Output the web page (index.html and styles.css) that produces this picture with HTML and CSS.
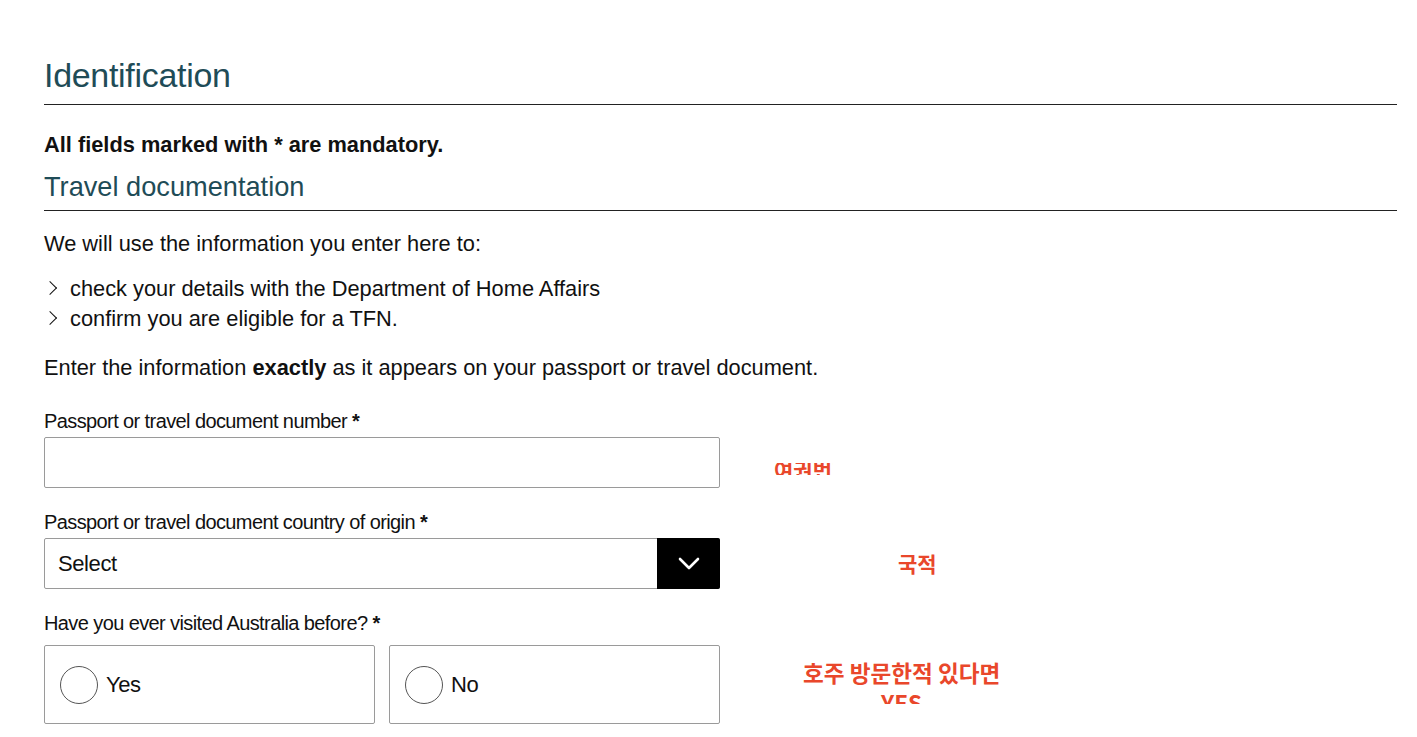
FILE: index.html
```html
<!DOCTYPE html>
<html>
<head>
    <title>Identification</title>
    <link rel="stylesheet" href="styles.css">
</head>
<body>
    <div class="page">
        <h1 class="page-title">Identification</h1>
        <p class="mandatory">All fields marked with * are mandatory.</p>

        <h2 class="section-title">Travel documentation</h2>
        <p class="intro">We will use the information you enter here to:</p>
        <ul class="chevron-list">
            <li>check your details with the Department of Home Affairs</li>
            <li>confirm you are eligible for a TFN.</li>
        </ul>
        <p class="intro">Enter the information <strong>exactly</strong> as it appears on your passport or travel document.</p>

        <form class="id-form">
            <div class="field">
                <label for="docNumber">Passport or travel document number <span class="req">*</span></label>
                <input type="text" id="docNumber" class="text-input">
                <span class="note note-number"><span>여권번호</span></span>
            </div>

            <div class="field">
                <label for="docCountry">Passport or travel document country of origin <span class="req">*</span></label>
                <div class="select-box">
                    <span class="select-value" id="docCountry">Select</span>
                    <span class="select-btn">
                        <svg width="22" height="14" viewBox="0 0 22 14"><path d="M2 2 L11 11 L20 2" fill="none" stroke="#fff" stroke-width="2.6" stroke-linecap="round" stroke-linejoin="round"/></svg>
                    </span>
                </div>
                <span class="note note-country">국적</span>
            </div>

            <div class="field">
                <label class="group-label">Have you ever visited Australia before? <span class="req">*</span></label>
                <div class="radio-row">
                    <label class="radio-card"><span class="radio-dot"></span>Yes</label>
                    <label class="radio-card"><span class="radio-dot"></span>No</label>
                </div>
                <span class="note note-visit">호주 방문한적 있다면<br>YES</span>
            </div>
        </form>
    </div>
</body>
</html>
```

FILE: styles.css
```css
/* Identification form */

body {
    font-family: "Liberation Sans", Arial, sans-serif;
    color: #111;
    background-color: #fff;
    margin: 0;
    padding: 0;
}

.page {
    padding: 55px 20px 0 44px;
    overflow: hidden;
    height: 682px;
}

.page-title {
    font-weight: normal;
    font-size: 34px;
    color: #1f4c57;
    margin: 0;
    padding-bottom: 9px;
    border-bottom: 1px solid #222;
    line-height: 40px;
    letter-spacing: -0.3px;
}

.mandatory {
    font-weight: bold;
    font-size: 21.8px;
    margin: 28px 0 0;
    line-height: 24px;
}

.section-title {
    font-weight: normal;
    font-size: 27.2px;
    color: #1f4c57;
    margin: 15px 0 0;
    line-height: 30px;
    padding-bottom: 8px;
    border-bottom: 1px solid #222;
}

.intro {
    font-size: 21.8px;
    margin: 20px 0 0;
    line-height: 26px;
}

.chevron-list {
    list-style: none;
    margin: 17px 0 0;
    padding: 0;
    font-size: 21.8px;
}

.chevron-list li {
    line-height: 30px;
    padding-left: 26px;
    position: relative;
}

.chevron-list li::before {
    content: "";
    position: absolute;
    left: 1px;
    top: 9px;
    width: 9px;
    height: 9px;
    border-top: 1.6px solid #111;
    border-right: 1.6px solid #111;
    transform: rotate(45deg);
}

.chevron-list + .intro {
    margin-top: 21px;
}

.id-form {
    margin-top: 29px;
    width: 676px;
}

.field {
    position: relative;
    margin-bottom: 23px;
}

.field label {
    display: block;
    font-size: 20px;
    line-height: 22px;
    letter-spacing: -0.6px;
    margin-bottom: 5px;
}

.field .group-label {
    margin-bottom: 11px;
}

.req {
    font-weight: bold;
}

.text-input {
    display: block;
    box-sizing: border-box;
    width: 100%;
    height: 51px;
    border: 1px solid #9a9a9a;
    border-radius: 2px;
    margin: 0;
}

.select-box {
    display: flex;
    height: 51px;
    box-sizing: border-box;
    border: 1px solid #9a9a9a;
    border-radius: 2px;
}

.select-value {
    flex: 1;
    display: flex;
    align-items: center;
    padding-left: 13px;
    font-size: 22px;
    letter-spacing: -0.4px;
}

.select-btn {
    width: 63px;
    background-color: #000;
    display: flex;
    align-items: center;
    justify-content: center;
    margin: -1px -1px -1px 0;
    border-radius: 0 2px 2px 0;
}

.radio-row {
    display: flex;
    gap: 14px;
}

.field .radio-card {
    flex: 1;
    display: flex;
    align-items: center;
    height: 79px;
    box-sizing: border-box;
    border: 1px solid #9a9a9a;
    border-radius: 2px;
    padding-left: 15px;
    font-size: 22px;
    margin: 0;
    letter-spacing: -0.4px;
}

.radio-dot {
    width: 36px;
    height: 36px;
    border: 1px solid #555;
    border-radius: 50%;
    margin-right: 8px;
}

/* Red notes written over the screenshot */
.note {
    position: absolute;
    font-family: "Noto Sans CJK KR", sans-serif;
    font-weight: bold;
    font-size: 21px;
    color: #e9472b;
    white-space: nowrap;
    line-height: 30px;
}

.note-number {
    left: 730px;
    top: 53px;
    height: 12px;
    width: 59px;
    overflow: hidden;
}

.note-number span {
    display: block;
    margin-top: -9px;
}

.note-country {
    left: 854px;
    top: 37px;
}

.note-visit {
    left: 759px;
    top: 46px;
    font-size: 22.6px;
    text-align: center;
    height: 46px;
    overflow: hidden;
}
```
